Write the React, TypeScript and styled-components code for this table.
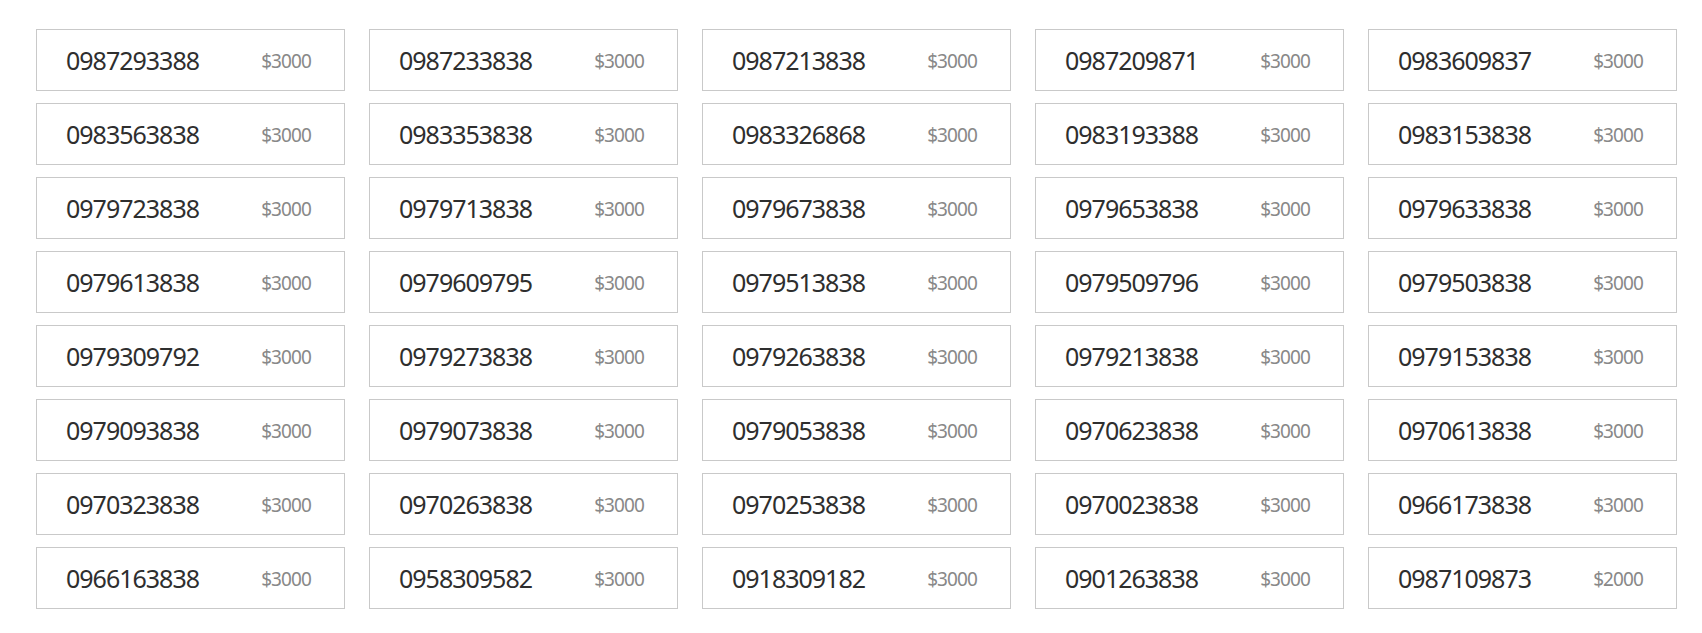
import React from "react";
import styled, { createGlobalStyle } from "styled-components";

const Global = createGlobalStyle`
  html, body { margin: 0; padding: 0; background: #ffffff; }
  body { font-family: "Noto Sans", "Open Sans", sans-serif; }
`;

const Page = styled.div`
  padding: 29px 0 0 36px;
`;

const Grid = styled.ul`
  list-style: none;
  margin: 0;
  padding: 0;
  display: grid;
  grid-template-columns: repeat(5, 309px);
  grid-auto-rows: 62px;
  column-gap: 24px;
  row-gap: 12px;
`;

const Card = styled.li`
  box-sizing: border-box;
  border: 1px solid #c9c9c9;
  background: #fff;
  display: flex;
  align-items: center;
  justify-content: space-between;
  padding: 0 33px 0 29px;
`;

const Number = styled.span`
  font-family: "Noto Sans", "Open Sans", sans-serif;
  font-size: 25px;
  letter-spacing: -1px;
  color: #2e2e2e;
  line-height: 1;
`;

const Price = styled.span`
  font-family: "Noto Sans", "Open Sans", sans-serif;
  font-size: 19px;
  letter-spacing: -0.9px;
  color: #888888;
  line-height: 1;
  padding-top: 3px;
`;

const numbers: [string, string][] = [
  ["0987293388", "$3000"], ["0987233838", "$3000"], ["0987213838", "$3000"], ["0987209871", "$3000"], ["0983609837", "$3000"],
  ["0983563838", "$3000"], ["0983353838", "$3000"], ["0983326868", "$3000"], ["0983193388", "$3000"], ["0983153838", "$3000"],
  ["0979723838", "$3000"], ["0979713838", "$3000"], ["0979673838", "$3000"], ["0979653838", "$3000"], ["0979633838", "$3000"],
  ["0979613838", "$3000"], ["0979609795", "$3000"], ["0979513838", "$3000"], ["0979509796", "$3000"], ["0979503838", "$3000"],
  ["0979309792", "$3000"], ["0979273838", "$3000"], ["0979263838", "$3000"], ["0979213838", "$3000"], ["0979153838", "$3000"],
  ["0979093838", "$3000"], ["0979073838", "$3000"], ["0979053838", "$3000"], ["0970623838", "$3000"], ["0970613838", "$3000"],
  ["0970323838", "$3000"], ["0970263838", "$3000"], ["0970253838", "$3000"], ["0970023838", "$3000"], ["0966173838", "$3000"],
  ["0966163838", "$3000"], ["0958309582", "$3000"], ["0918309182", "$3000"], ["0901263838", "$3000"], ["0987109873", "$2000"],
];

export default function App() {
  return (
    <>
      <Global />
      <Page>
        <Grid>
          {numbers.map(([n, p]) => (
            <Card key={n}>
              <Number>{n}</Number>
              <Price>{p}</Price>
            </Card>
          ))}
        </Grid>
      </Page>
    </>
  );
}
